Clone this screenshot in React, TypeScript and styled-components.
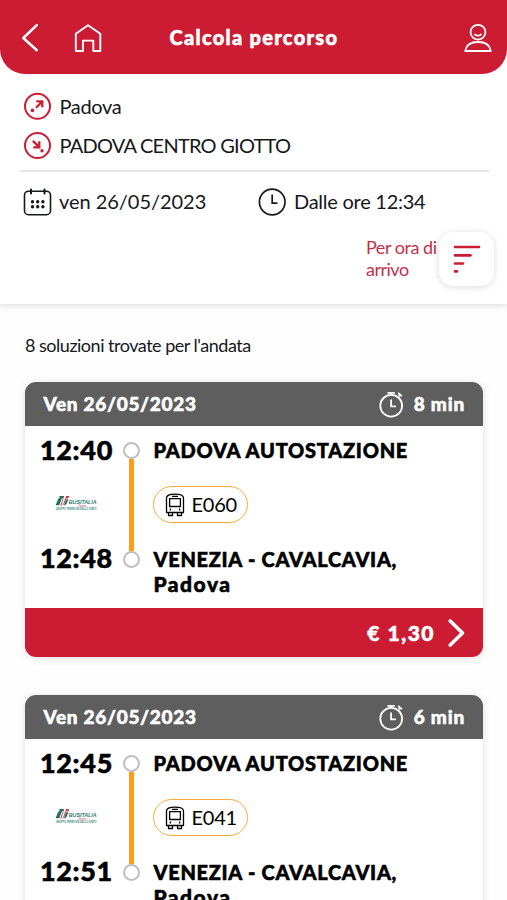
import React from 'react';
import styled, { createGlobalStyle } from 'styled-components';

const RED = '#cc1c33';

const Global = createGlobalStyle`
  * { box-sizing: border-box; }
  body { margin: 0; background: #fff; overflow: hidden; }
`;
const Screen = styled.main`
  width: 507px; height: 900px; overflow: hidden; background: #fefefe; color: #16181a;
  font-family: Lato, "Open Sans", sans-serif; font-size: 20px;
`;
const Text = styled.span<{ $ls?: number; $size?: number; $heavy?: boolean; $lh?: number }>`
  white-space: pre; letter-spacing: ${p => p.$ls ?? 0}px; font-size: ${p => p.$size ?? 20}px;
  font-weight: ${p => (p.$heavy ? 900 : 400)}; line-height: ${p => p.$lh ?? 25}px;
  -webkit-text-stroke: ${p => (p.$heavy ? '0.55px currentColor' : '0')};
`;
const SearchPanel = styled.section`
  height: 304px; background: #fff; box-shadow: 0 2px 7px rgba(0,0,0,.13);
`;
const Header = styled.header`
  height: 74px; padding: 1px 14px 0 20px; background: ${RED}; color: #fff;
  border-radius: 0 0 25px 25px; display: grid; grid-template-columns: 53px 96.5px 1fr 30px; align-items: center;
`;
const StationRow = styled.div<{ $top: number }>`
  display: flex; align-items: center; gap: 8.5px; height: 28px; margin: ${p => p.$top}px 0 0 23px;
`;
const WhenRow = styled.div`
  margin: 11px 18px 0 20px; height: 61px; border-top: 2px solid #e6e6e6;
  display: grid; grid-template-columns: 235px 1fr; align-items: center;
`;
const WhenItem = styled.div`
  display: flex; align-items: center; gap: 8px; padding-left: 3px;
`;
const SortRow = styled.div`
  display: flex; justify-content: flex-end; margin: 1px 13px 0 0; height: 54px;
`;
const SortLabel = styled.div`
  color: #c4304b; display: flex; flex-direction: column; padding-top: 4px; width: 73px;
  span { line-height: 22px; }
`;
const SortButton = styled.button`
  width: 55px; height: 54px; padding: 0; border: 0; border-radius: 14px; background: #fff;
  box-shadow: 0 1px 7px rgba(0,0,0,.15); display: grid; place-items: center;
`;
const Results = styled.section`
  padding: 29px 24px 0 25px; display: flex; flex-direction: column;
`;
const Summary = styled.div`
  height: 49px; display: flex; align-items: flex-start;
`;
const Card = styled.article`
  width: 458px; height: 275px; border-radius: 11px; background: #fff; overflow: hidden; flex: none;
  box-shadow: 0 1px 8px rgba(0,0,0,.13); margin-bottom: 38px;
`;
const CardHead = styled.header`
  height: 44px; background: #5e5e5e; color: #fff; display: flex; align-items: center; padding: 0 18px 1px 18.5px;
`;
const Duration = styled.div`
  display: flex; align-items: center; gap: 10px; margin-left: auto;
`;
const CardBody = styled.div`
  height: 182px; display: grid; grid-template-columns: 98px 17px 1fr; color: #000; padding-top: 12px;
`;
const Times = styled.div`
  display: flex; flex-direction: column; align-items: flex-start; padding-left: 15px;
`;
const LogoSlot = styled.div`
  height: 84px; padding: 35px 0 0 15px;
`;
const Rail = styled.div`
  display: flex; flex-direction: column; align-items: center; padding-top: 4px;
`;
const Stop = styled.i`
  width: 17px; height: 17px; border: 2.5px solid #bfbfbf; border-radius: 50%; background: #fff;
`;
const Track = styled.i`
  width: 5px; height: 92px; background: #ff9d16;
`;
const Stops = styled.div`
  padding-left: 13.5px; display: flex; flex-direction: column; align-items: flex-start;
`;
const LinePill = styled.div`
  width: 95px; height: 37px; margin: 23px 0 24px -1px; border: 1.6px solid #ffa937; border-radius: 19px;
  display: flex; align-items: center; gap: 7px; padding-left: 11px;
`;
const Price = styled.footer`
  height: 49px; background: ${RED}; color: #fff; display: flex; align-items: center;
  justify-content: flex-end; gap: 13px; padding-right: 17px;
`;
const Svg = styled.svg`
  display: block; flex: none; fill: none; stroke: currentColor; overflow: visible;
`;

const BackIcon = () => <Svg width="20" height="28" viewBox="0 0 20 28" strokeWidth="2.5" strokeLinecap="round" strokeLinejoin="round"><path d="M16.8 1.2 3.3 14l13.5 12.2" /></Svg>;
const HomeIcon = () => <Svg width="30" height="30" viewBox="0 0 30 30" strokeWidth="1.9" strokeLinejoin="round"><path d="M2.8 28V10.8L15 2.3l12.3 8.5V28h-7V17.6H10V28Z" /></Svg>;
const UserIcon = () => <Svg width="30" height="30" viewBox="0 0 30 30" strokeWidth="1.8" strokeLinejoin="round"><circle cx="15" cy="9.2" r="7.4" /><path d="M11.5 11c1.7 2.1 5.3 2.1 7 0M2.2 28c.9-6 6-9 12.8-9s11.9 3 12.8 9Z" /></Svg>;
const FromIcon = () => <Svg width="28" height="28" viewBox="0 0 28 28" color={RED} strokeWidth="2"><circle cx="14.5" cy="14.3" r="12.5" /><path d="m13 15.8 6-6M13.3 9.3h6v6" strokeWidth="2.3" /><circle cx="9.4" cy="18.4" r="1.8" fill="currentColor" stroke="none" /></Svg>;
const ToIcon = () => <Svg width="28" height="28" viewBox="0 0 28 28" color={RED} strokeWidth="2"><circle cx="14.5" cy="14.5" r="12.5" /><path d="m9.9 9.9 6 6M16.3 10.3v6h-6" strokeWidth="2.3" /><circle cx="19" cy="19.7" r="1.7" fill="currentColor" stroke="none" /></Svg>;
const CalendarIcon = () => (
  <Svg width="28" height="28" viewBox="0 0 28 28" strokeWidth="1.6" strokeLinecap="round">
    <rect x="1.5" y="3.2" width="26" height="23.5" rx="4" /><path d="M8 1.5v4M21.5 1.5v4" strokeWidth="2" />
    <path d="M9.5 13.7h.01M14.7 13.7h.01M19.9 13.7h.01M9.5 18.8h.01M14.7 18.8h.01M19.9 18.8h.01" strokeWidth="3.4" />
  </Svg>
);
const ClockIcon = () => <Svg width="28" height="28" viewBox="0 0 28 28" strokeWidth="1.7"><circle cx="14.2" cy="14" r="12.8" /><path d="M14.2 6.5v8.7h5.2" /></Svg>;
const SortIcon = () => <Svg width="28" height="30" viewBox="0 0 28 30" color={RED} strokeWidth="2.7" strokeLinecap="round"><path d="M2 3h24M2 11.3h15.5M2 19.5h8M2 27.4h2" /></Svg>;
const TimerIcon = () => <Svg width="26" height="28" viewBox="0 0 26 28" strokeWidth="1.8"><circle cx="13.2" cy="15.7" r="10.9" /><path d="M13.1 9.4v7h4.8M9.5 2.8h7.3M13.1 2.8v2M20.8 6.3l2-1.9M20.1 3l3.8 3.2" /></Svg>;
const BusIcon = () => (
  <Svg width="20" height="24" viewBox="0 0 20 24" strokeWidth="1.3" strokeLinejoin="round">
    <path d="M1.5 19.5V5Q1.5 1.2 10 1.2T18.5 5v14.5ZM4.6 5.6h10.8v7.9H4.6ZM7 3.4h6M3.5 19.5v3h4v-3M12.5 19.5v3h4v-3" />
    <path d="M4.7 16.5H6M14 16.5h1.3" strokeWidth="1.8" />
  </Svg>
);
const NextIcon = () => <Svg width="18" height="30" viewBox="0 0 18 30" strokeWidth="3.6" strokeLinecap="round" strokeLinejoin="round"><path d="m2.2 3 12.3 12L2.2 27" /></Svg>;

const LogoName = styled.text`
  font: italic 700 5.6px "Liberation Sans", sans-serif; fill: #397e72; stroke: none;
`;
const LogoNote = styled.text<{ $red?: boolean }>`
  font: 700 2.6px "Liberation Sans", sans-serif; fill: ${p => (p.$red ? '#d2737d' : '#448b82')}; stroke: none;
`;
const OperatorLogo = () => (
  <Svg width="43" height="16" viewBox="0 0 43 16">
    <path d="M4.3 0h5.4L8.6 2.3H6.9L4.2 9.3H.6l2.2-5.6Q3.4 2.3 4.6 2Z" fill="#187361" stroke="none" />
    <path d="M10.4 0h4l-1 2.3h-1.9L9.4 7.5Q8.6 9.4 6.6 9.4H5.2L8 2Q8.8 0 10.4 0Z" fill="#d43b49" stroke="none" />
    <path d="M9.2 0h2L8 8.6Q7.5 9.4 6.4 9.4Z" fill="#fff" stroke="none" />
    <path d="M11.4 3.3h2l-1.6 4Q10.9 9.4 8.8 9.4Z" fill="#187361" stroke="none" />
    <LogoName x="13.7" y="8.3" textLength="28" lengthAdjust="spacingAndGlyphs">BUSITALIA</LogoName>
    <LogoNote $red x="23.5" y="11" textLength="8" lengthAdjust="spacingAndGlyphs">Veneto</LogoNote>
    <LogoNote x=".7" y="13.8" textLength="41" lengthAdjust="spacingAndGlyphs">GRUPPO FERROVIE DELLO STATO</LogoNote>
  </Svg>
);

type Trip = { duration: string; dep: string; arr: string; line: string };
const trips: Trip[] = [
  { duration: '8 min', dep: '12:40', arr: '12:48', line: 'E060' },
  { duration: '6 min', dep: '12:45', arr: '12:51', line: 'E041' },
];

const TripCard = ({ duration, dep, arr, line }: Trip) => (
  <Card>
    <CardHead>
      <Text $heavy $size={19} $ls={0.7}>Ven 26/05/2023</Text>
      <Duration><TimerIcon /><Text $heavy $size={19} $ls={0.8}>{duration}</Text></Duration>
    </CardHead>
    <CardBody>
      <Times>
        <Text $heavy $size={27} $ls={0.65} $lh={23}>{dep}</Text>
        <LogoSlot><OperatorLogo /></LogoSlot>
        <Text $heavy $size={27} $ls={0.6}>{arr}</Text>
      </Times>
      <Rail><Stop /><Track /><Stop /></Rail>
      <Stops>
        <Text $heavy $ls={0.75}>PADOVA AUTOSTAZIONE</Text>
        <LinePill><BusIcon /><Text $ls={-0.25}>{line}</Text></LinePill>
        <Text $heavy $ls={0.7}>VENEZIA - CAVALCAVIA,</Text>
        <Text $heavy $ls={1.5} $size={21} $lh={23}>Padova</Text>
      </Stops>
    </CardBody>
    <Price><Text $heavy $size={21} $ls={1.5}>€ 1,30</Text><NextIcon /></Price>
  </Card>
);

export default function App() {
  return (
    <Screen>
      <Global />
      <SearchPanel>
        <Header>
          <BackIcon /><HomeIcon /><Text $heavy $ls={1.3}>Calcola percorso</Text><UserIcon />
        </Header>
        <StationRow $top={18}><FromIcon /><Text $ls={-0.35}>Padova</Text></StationRow>
        <StationRow $top={11}><ToIcon /><Text $ls={-0.76}>PADOVA CENTRO GIOTTO</Text></StationRow>
        <WhenRow>
          <WhenItem><CalendarIcon /><Text $ls={-0.04}>ven 26/05/2023</Text></WhenItem>
          <WhenItem><ClockIcon /><Text $ls={-0.26}>Dalle ore 12:34</Text></WhenItem>
        </WhenRow>
        <SortRow>
          <SortLabel><Text $size={18} $ls={-0.47}>Per ora di</Text><Text $size={18} $ls={-0.5}>arrivo</Text></SortLabel>
          <SortButton aria-label="Ordina"><SortIcon /></SortButton>
        </SortRow>
      </SearchPanel>
      <Results>
        <Summary><Text $size={18} $ls={-0.49}>8 soluzioni trovate per l'andata</Text></Summary>
        {trips.map(t => <TripCard key={t.dep} {...t} />)}
      </Results>
    </Screen>
  );
}
